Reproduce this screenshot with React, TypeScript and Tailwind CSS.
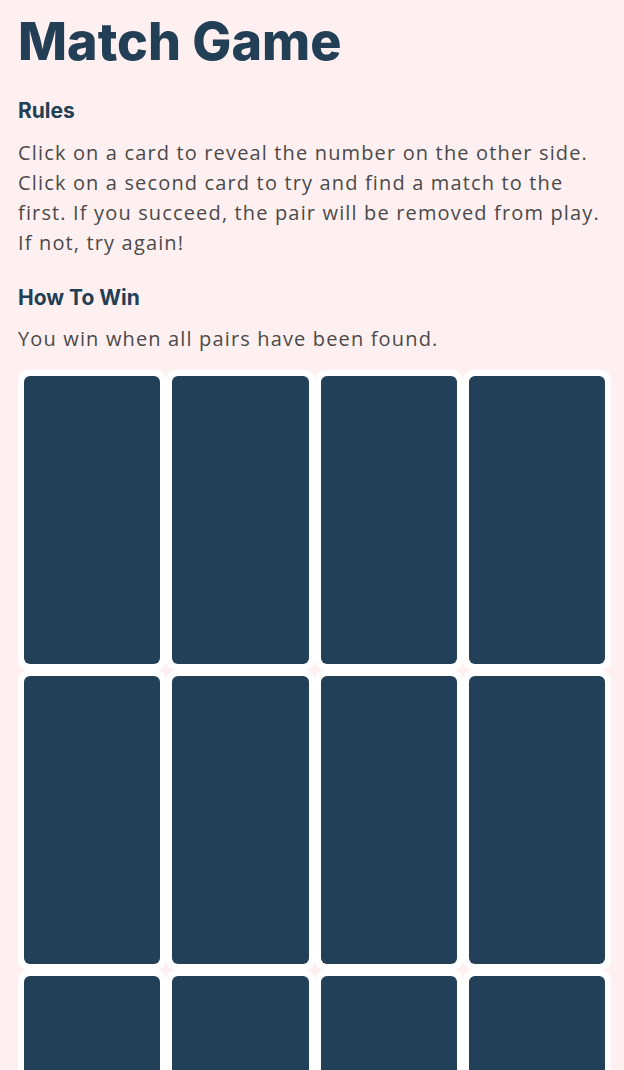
import React from 'react';

const cards = Array.from({ length: 16 }, (_, i) => i);

export default function App() {
  return (
    <div className="min-h-screen bg-[#fef0f0] pl-[18px] pr-[13px] pt-[10px] font-['Open_Sans',sans-serif] text-[#4a4a4a]">
      <h1 className="font-['Inter',sans-serif] text-[52px] font-extrabold leading-[64px] text-[#223f56]">
        Match Game
      </h1>
      <h3 className="mt-[22px] font-['Inter',sans-serif] text-[21px] font-bold leading-[30px] text-[#223f56]">Rules</h3>
      <p className="mt-[12px] text-[20px] leading-[30px] tracking-[1.15px]">
        Click on a card to reveal the number on the other side.
        <br />
        Click on a second card to try and find a match to the
        <br />
        first. If you succeed, the pair will be removed from play.
        <br />
        If not, try again!
      </p>
      <h3 className="mt-[25px] font-['Inter',sans-serif] text-[21px] font-bold leading-[30px] text-[#223f56]">How To Win</h3>
      <p className="mt-[11px] text-[20px] leading-[30px] tracking-[1.15px]">You win when all pairs have been found.</p>
      <div className="mt-[16px] grid grid-cols-4">
        {cards.map((c) => (
          <div key={c} className="h-[300px] rounded-[10px] bg-white p-[6px]">
            <div className="h-full w-full rounded-[6px] bg-[#224057]" />
          </div>
        ))}
      </div>
    </div>
  );
}
